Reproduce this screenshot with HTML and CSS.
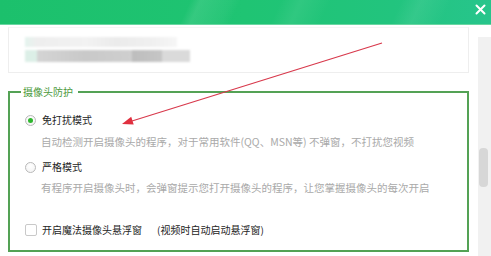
FILE: index.html
```html
<!DOCTYPE html>
<html lang="zh-CN">
<head>
<meta charset="utf-8">
<link rel="stylesheet" href="styles.css">
</head>
<body>
<div class="window">
  <div class="titlebar">
    <svg class="close" width="11" height="11" viewBox="0 0 11 11"><path d="M1.5 1.5 L9.5 9.5 M9.5 1.5 L1.5 9.5" stroke="#fff" stroke-width="2" stroke-linecap="round"/></svg>
  </div>
  <div class="main">
    <div class="content">
      <div class="infobox">
        <div class="blur b1"></div>
        <div class="blur b2"><span class="s1"></span><span class="s2"></span><span class="s3"></span><span class="s4"></span></div>
      </div>
      <fieldset class="group">
        <legend class="legend">摄像头防护</legend>
        <div class="row r1"><span class="radio on"></span><span class="label">免打扰模式</span></div>
        <div class="desc d1">自动检测开启摄像头的程序，对于常用软件(QQ、MSN等) 不弹窗，不打扰您视频</div>
        <div class="row r2"><span class="radio"></span><span class="label">严格模式</span></div>
        <div class="desc d2">有程序开启摄像头时，会弹窗提示您打开摄像头的程序，让您掌握摄像头的每次开启</div>
        <div class="row r3"><span class="check"></span><span class="label">开启魔法摄像头悬浮窗</span><span class="label note">(视频时自动启动悬浮窗)</span></div>
      </fieldset>
    </div>
    <div class="scrollbar"><div class="thumb"></div></div>
  </div>
  <svg class="arrow" width="491" height="256" viewBox="0 0 491 256">
    <line x1="382" y1="43" x2="132" y2="121" stroke="#d8394c" stroke-width="1.2"/>
    <polygon points="122,124 133.7,124.6 131.2,116.8" fill="#e0303f"/>
  </svg>
</div>
</body>
</html>
```

FILE: styles.css
```css
* { box-sizing: border-box; }
html, body { margin: 0; padding: 0; background: #fff; }
body {
  font-family: "Noto Sans CJK SC", "Noto Sans", sans-serif;
  width: 491px;
  height: 256px;
  overflow: hidden;
}
.window {
  position: relative;
  width: 491px;
  height: 256px;
  overflow: hidden;
  background: #fff;
  display: flex;
  flex-direction: column;
}
.titlebar {
  height: 25px;
  flex: none;
  display: flex;
  justify-content: flex-end;
  align-items: flex-start;
  padding: 4px 5px 0 0;
  background:
    linear-gradient(115deg, rgba(255,255,255,0) 0%, rgba(255,255,255,0) 38%, rgba(255,255,255,0.10) 40%, rgba(255,255,255,0.04) 46%, rgba(255,255,255,0) 48%, rgba(255,255,255,0) 100%),
    linear-gradient(115deg, rgba(255,255,255,0) 56%, rgba(255,255,255,0.07) 60%, rgba(255,255,255,0) 66%, rgba(255,255,255,0) 80%, rgba(255,255,255,0.08) 84%, rgba(255,255,255,0) 90%),
    linear-gradient(90deg, #1cc06c 0%, #1fc473 50%, #22c47e 80%, #27c58c 100%);
  border-bottom: 1px solid #6ad6a2;
}
.close { display: block; }
.main {
  flex: 1;
  display: flex;
}
.content {
  width: 478px;
  padding: 2px 9px 0 8px;
}
.infobox {
  height: 46px;
  border: 1px solid #eeeeee;
  border-top-color: #f6f6f6;
  padding: 9px 0 0 16px;
}
.blur { filter: blur(1.2px); }
.b1 {
  width: 152px;
  height: 10px;
  background: linear-gradient(90deg, #e4f4ee 0%, #eeeeee 8%, #f2f2f2 40%, #ebebeb 60%, #f0f0f0 85%, #f6f6f6 100%);
}
.b2 {
  margin-top: 3px;
  display: flex;
  height: 12px;
}
.b2 span { display: block; height: 12px; }
.s1 { width: 12px; background: #dcefe7; }
.s2 { width: 95px; background: linear-gradient(90deg, #d4d4d4, #c9c9c9 50%, #cfcfcf); }
.s3 { width: 30px; background: linear-gradient(90deg, #bdbdbd, #c6c6c6); }
.s4 { width: 28px; background: #dadada; }
.group {
  margin: 12px 0 0 0;
  padding: 11px 0 0 15px;
  border: 2px solid #54a255;
  height: 167px;
  min-width: 0;
}
.legend {
  font-size: 10px;
  line-height: 14px;
  color: #4c9a3c;
  padding: 0 5px 0 2px;
  margin-left: -4px;
}
.row {
  height: 20px;
  display: flex;
  align-items: center;
}
.r2 { margin-top: 5px; }
.r3 { margin-top: 22px; }
.label {
  font-size: 10px;
  color: #252525;
  line-height: 20px;
}
.note { margin-left: 15px; }
.radio {
  width: 11px;
  height: 11px;
  border-radius: 50%;
  border: 1px solid #b9b9b9;
  background: radial-gradient(circle at 50% 35%, #ffffff, #f1f1f1);
  margin-right: 6px;
  display: flex;
  align-items: center;
  justify-content: center;
  flex: none;
}
.radio.on::after {
  content: "";
  width: 5px;
  height: 5px;
  border-radius: 50%;
  background: #2eb62e;
}
.check {
  width: 12px;
  height: 12px;
  border: 1px solid #c9c9c9;
  border-radius: 2px;
  background: #fff;
  margin-right: 5px;
  flex: none;
}
.desc {
  font-size: 10.5px;
  line-height: 20px;
  height: 20px;
  color: #a9a9a9;
  padding-left: 16px;
  white-space: nowrap;
}
.d1 { margin-top: 2px; }
.d2 { margin-top: 1px; }
.scrollbar {
  width: 13px;
  margin-top: 12px;
  background: #f1f1f1;
  padding: 111px 0 0 1px;
}
.thumb {
  width: 9px;
  height: 39px;
  border-radius: 4px;
  background: #d7d7d7;
}
.arrow {
  position: absolute;
  left: 0;
  top: 0;
  pointer-events: none;
}
```
